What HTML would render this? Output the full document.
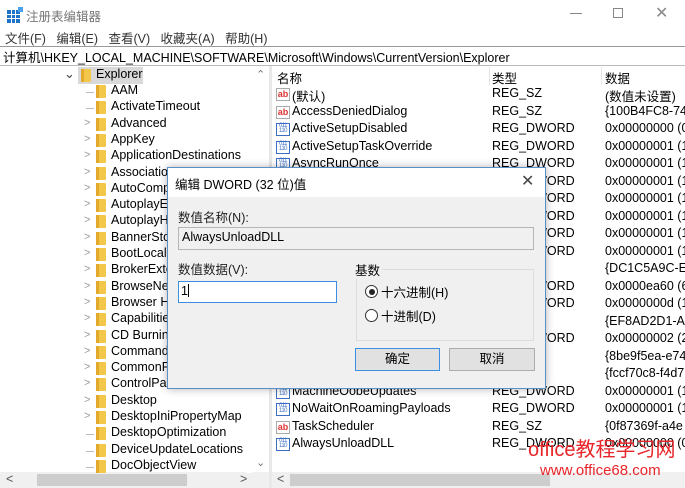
<!DOCTYPE html>
<html><head><meta charset="utf-8"><style>
*{margin:0;padding:0;box-sizing:border-box}
body{width:685px;height:488px;overflow:hidden;background:#fff;font-family:"Liberation Sans","Noto Sans CJK SC",sans-serif;font-size:12.5px;color:#000;position:relative}
.a{position:absolute;white-space:nowrap}
.fold{position:absolute;width:10px;height:13px;background:#f3c84a;border-radius:1px}
.fold:before{content:"";position:absolute;left:0;top:0;width:3px;height:13px;background:#e3a92a}
.chev{position:absolute;color:#999;font-size:11px}
.dash{position:absolute;width:8px;height:1px;background:#bbb}
.ab{position:absolute;width:14px;height:13px;border:1px solid #aaa;background:#fff;color:#d33;font-size:9px;font-weight:bold;line-height:10px;text-align:center}
.dw{position:absolute;width:14px;height:13px;border:1px solid #3a6fc4;background:#fff;color:#3a6fc4;font-size:6px;line-height:5px;text-align:center;letter-spacing:-0.5px}
</style></head><body>
<div class="a" style="left:7px;top:7px;width:16px;height:16px;">
<svg width="16" height="16"><rect x="0" y="3" width="13" height="13" fill="#1e73c8"/><g stroke="#fff" stroke-width="1"><line x1="0" y1="7.5" x2="13" y2="7.5"/><line x1="0" y1="11.5" x2="13" y2="11.5"/><line x1="4.5" y1="3" x2="4.5" y2="16"/><line x1="8.5" y1="3" x2="8.5" y2="16"/></g><rect x="11" y="0" width="5" height="5" fill="#4aa3ea"/></svg></div>
<div class="a" style="left:26px;top:6px;color:#777;font-size:12.5px">注册表编辑器</div>
<div class="a" style="left:570px;top:13px;width:12px;height:1px;background:#888"></div>
<div class="a" style="left:613px;top:8px;width:10px;height:10px;border:1px solid #888"></div>
<div class="a" style="left:655px;top:3px;color:#888;font-size:16px">✕</div>
<div class="a" style="left:5px;top:28px;color:#333">文件(F)&nbsp;&nbsp; 编辑(E)&nbsp;&nbsp; 查看(V)&nbsp;&nbsp; 收藏夹(A)&nbsp;&nbsp; 帮助(H)</div>
<div class="a" style="left:0;top:46px;width:685px;height:20px;border-top:1px solid #999;border-bottom:1px solid #bbb;"></div>
<div class="a" style="left:3px;top:47px;font-size:12.5px">计算机\HKEY_LOCAL_MACHINE\SOFTWARE\Microsoft\Windows\CurrentVersion\Explorer</div>
<div class="a" style="left:252px;top:67px;width:17px;height:405px;background:#fff"></div>
<div class="a" style="left:256px;top:68px;color:#777;font-size:11px">&#8963;</div>
<div class="a" style="left:256px;top:456px;color:#777;font-size:11px">&#8964;</div>
<div class="a" style="left:0;top:472px;width:269px;height:16px;background:#f0f0f0"></div>
<div class="a" style="left:37px;top:474px;width:150px;height:12px;background:#cdcdcd"></div>
<div class="a" style="left:6px;top:472px;color:#555">&lt;</div>
<div class="a" style="left:240px;top:472px;color:#555">&gt;</div>
<div class="a" style="left:269px;top:66px;width:3px;height:422px;background:#e8e8e8"></div>
<div class="a" style="left:78px;top:67px;width:65px;height:17px;background:#d9d9d9"></div>
<div class="a" style="left:64px;top:66px;color:#444;font-size:13px">&#8964;</div>
<div class="fold" style="left:81px;top:69px"></div>
<div class="a" style="left:96px;top:67px">Explorer</div>
<div id="tree"></div>
<div class="a" style="left:277px;top:68px">名称</div>
<div class="a" style="left:489px;top:67px;width:1px;height:18px;background:#e5e5e5"></div>
<div class="a" style="left:492px;top:68px">类型</div>
<div class="a" style="left:601px;top:67px;width:1px;height:18px;background:#e5e5e5"></div>
<div class="a" style="left:605px;top:68px">数据</div>
<div id="list"></div>
<div class="a" style="left:272px;top:472px;width:413px;height:16px;background:#f0f0f0"></div>
<div class="a" style="left:290px;top:474px;width:260px;height:12px;background:#cdcdcd"></div>
<div class="a" style="left:277px;top:472px;color:#555">&lt;</div>
<div class="a" style="left:167px;top:167px;width:379px;height:222px;background:#f0f0f0;border:1px solid #5a8fc8;box-shadow:0 0 8px rgba(0,0,0,.3)">
<div class="a" style="left:0;top:0;width:377px;height:29px;background:#fff"></div>
<div class="a" style="left:7px;top:6px;font-size:12.5px">编辑 DWORD (32 位)值</div>
<div class="a" style="left:353px;top:3px;font-size:16px;color:#444">✕</div>
<div class="a" style="left:10px;top:39px;color:#222">数值名称(N):</div>
<div class="a" style="left:10px;top:59px;width:356px;height:23px;border:1px solid #b5b5b5;background:#f0f0f0"></div>
<div class="a" style="left:14px;top:62px">AlwaysUnloadDLL</div>
<div class="a" style="left:10px;top:91px;color:#222">数值数据(V):</div>
<div class="a" style="left:10px;top:113px;width:159px;height:22px;border:1px solid #3c8ee0;background:#fff"></div>
<div class="a" style="left:13px;top:116px">1<span style="display:inline-block;width:1px;height:13px;background:#000;vertical-align:-2px"></span></div>
<div class="a" style="left:188px;top:101px;width:178px;height:72px;border:1px solid #dcdcdc"></div>
<div class="a" style="left:185px;top:92px;background:#f0f0f0;padding:0 2px">基数</div>
<div class="a" style="left:197px;top:117px;width:13px;height:13px;border:1px solid #333;border-radius:50%;background:#fff"><div style="margin:2.5px;width:6px;height:6px;border-radius:50%;background:#222"></div></div>
<div class="a" style="left:213px;top:114px">十六进制(H)</div>
<div class="a" style="left:197px;top:141px;width:13px;height:13px;border:1px solid #333;border-radius:50%;background:#fff"></div>
<div class="a" style="left:213px;top:138px">十进制(D)</div>
<div class="a" style="left:187px;top:180px;width:85px;height:23px;border:1px solid #3c8ee0;background:#e1e1e1;text-align:center;line-height:21px">确定</div>
<div class="a" style="left:281px;top:180px;width:86px;height:23px;border:1px solid #adadad;background:#e1e1e1;text-align:center;line-height:21px">取消</div>
</div>
<div class="a" style="left:528px;top:433px;color:#e8262a;font-size:20px;font-family:'Liberation Sans','Noto Sans CJK SC',sans-serif">office教程学习网</div>
<div class="a" style="left:540px;top:462px;color:#e8262a;font-size:15px">www.office68.com</div>
<script>
var t=[["AAM",0],["ActivateTimeout",0],["Advanced",1],["AppKey",1],["ApplicationDestinations",1],["Associations",1],["AutoComplete",1],["AutoplayEnabled",1],["AutoplayHandlers",1],["BannerStore",1],["BootLocale",1],["BrokerExtensions",1],["BrowseNewProcess",1],["Browser Helper",1],["Capabilities",1],["CD Burning",1],["CommandStore",1],["CommonPlaces",1],["ControlPanel",1],["Desktop",1],["DesktopIniPropertyMap",1],["DesktopOptimization",0],["DeviceUpdateLocations",0],["DocObjectView",0]];
var h="";for(var i=0;i<t.length;i++){var y=83+i*16.3;h+='<div class="fold" style="left:96px;top:'+(y+2)+'px"></div><div class="a" style="left:111px;top:'+y+'px">'+t[i][0]+'</div>';h+=t[i][1]?'<div class="chev" style="left:84px;top:'+(y+1)+'px">&gt;</div>':'<div class="dash" style="left:86px;top:'+(y+9)+'px"></div>';}
h+='<div class="a" style="left:246px;top:'+83+'px;width:6px;height:390px;background:#fff"></div>';
document.getElementById("tree").innerHTML=h;
var D="0x00000001 (1)";
var l=[["(默认)","REG_SZ","(数值未设置)",0],["AccessDeniedDialog","REG_SZ","{100B4FC8-74",0],["ActiveSetupDisabled","REG_DWORD","0x00000000 (0)",1],["ActiveSetupTaskOverride","REG_DWORD",D,1],["AsyncRunOnce","REG_DWORD",D,1],["x","REG_DWORD",D,1],["x","REG_DWORD",D,1],["x","REG_DWORD",D,1],["x","REG_DWORD",D,1],["x","REG_DWORD",D,1],["x","REG_SZ","{DC1C5A9C-E8",0],["x","REG_DWORD","0x0000ea60 (6",1],["x","REG_DWORD","0x0000000d (1",1],["x","REG_SZ","{EF8AD2D1-AE",0],["x","REG_DWORD","0x00000002 (2",1],["x","REG_SZ","{8be9f5ea-e74",0],["x","REG_SZ","{fccf70c8-f4d7",0],["MachineOobeUpdates","REG_DWORD",D,1],["NoWaitOnRoamingPayloads","REG_DWORD",D,1],["TaskScheduler","REG_SZ","{0f87369f-a4e",0],["AlwaysUnloadDLL","REG_DWORD","0x00000000 (0)",1]];
h="";for(i=0;i<l.length;i++){y=86+i*17.5;h+=(l[i][3]?'<div class="dw" style="left:276px;top:'+(y+2)+'px">011<br>110</div>':'<div class="ab" style="left:276px;top:'+(y+2)+'px">ab</div>');h+='<div class="a" style="left:292px;top:'+y+'px">'+l[i][0]+'</div><div class="a" style="left:492px;top:'+y+'px">'+l[i][1]+'</div><div class="a" style="left:605px;top:'+y+'px">'+l[i][2]+'</div>';}
document.getElementById("list").innerHTML=h;
</script>
</body></html>
